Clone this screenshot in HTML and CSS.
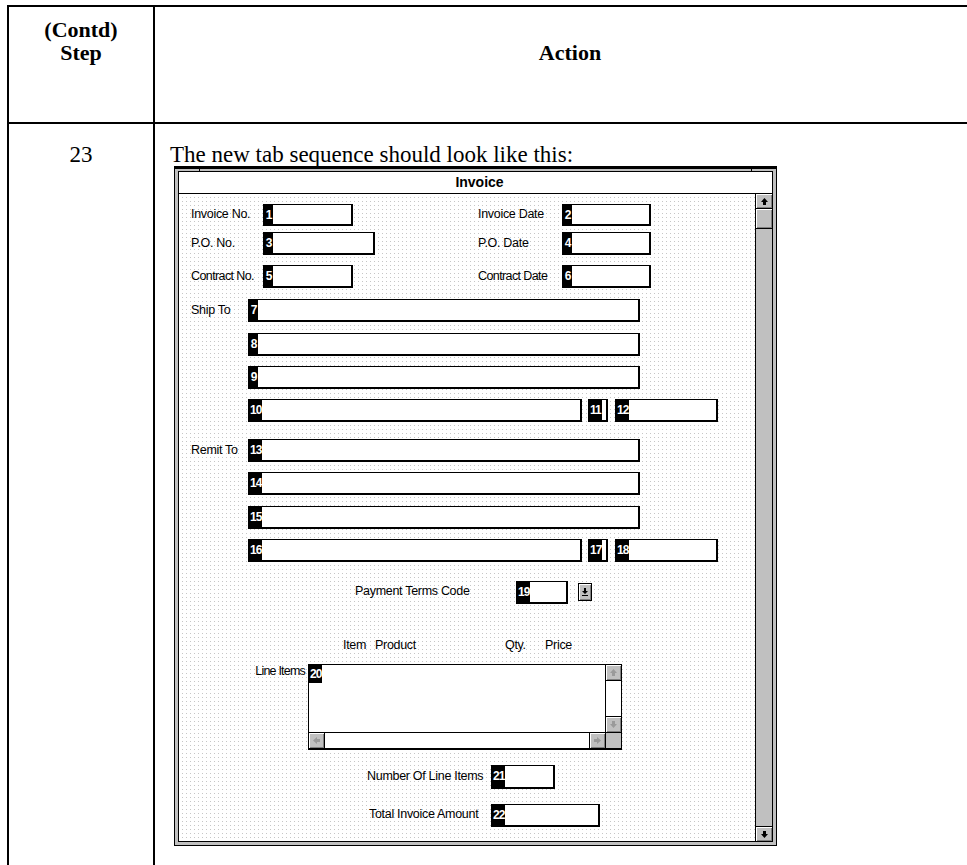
FILE: index.html
```html
<!DOCTYPE html>
<html>
<head>
    <title>Step 23</title>
    <link rel="stylesheet" href="styles.css">
</head>
<body>
    <table class="steps">
        <tr class="head">
            <th class="step-col">(Contd)<br>Step</th>
            <th class="action-col">Action</th>
        </tr>
        <tr>
            <td class="step-num">23</td>
            <td class="action">
                <p class="intro">The new tab sequence should look like this:</p>

                <div class="window">
                    <div class="inner">
                        <div class="titlebar">Invoice</div>
                        <div class="body">
                            <div class="canvas">
                                <span class="lbl l-invno">Invoice No.</span>
                                <div class="field f1"><span class="tag">1</span></div>
                                <span class="lbl l-invdate">Invoice Date</span>
                                <div class="field f2"><span class="tag">2</span></div>

                                <span class="lbl l-pono">P.O. No.</span>
                                <div class="field f3"><span class="tag">3</span></div>
                                <span class="lbl l-podate">P.O. Date</span>
                                <div class="field f4"><span class="tag">4</span></div>

                                <span class="lbl l-cno">Contract No.</span>
                                <div class="field f5"><span class="tag">5</span></div>
                                <span class="lbl l-cdate">Contract Date</span>
                                <div class="field f6"><span class="tag">6</span></div>

                                <span class="lbl l-ship">Ship To</span>
                                <div class="field wide f7"><span class="tag">7</span></div>
                                <div class="field wide f8"><span class="tag">8</span></div>
                                <div class="field wide f9"><span class="tag">9</span></div>
                                <div class="field city f10"><span class="tag">10</span></div>
                                <div class="field state f11"><span class="tag">11</span></div>
                                <div class="field zip f12"><span class="tag">12</span></div>

                                <span class="lbl l-remit">Remit To</span>
                                <div class="field wide f13"><span class="tag">13</span></div>
                                <div class="field wide f14"><span class="tag">14</span></div>
                                <div class="field wide f15"><span class="tag">15</span></div>
                                <div class="field city f16"><span class="tag">16</span></div>
                                <div class="field state f17"><span class="tag">17</span></div>
                                <div class="field zip f18"><span class="tag">18</span></div>

                                <span class="lbl l-pay">Payment Terms Code</span>
                                <div class="field f19"><span class="tag">19</span></div>
                                <div class="combo-btn">
                                    <svg width="8" height="10" viewBox="0 0 8 10"><path d="M3 1h2v3h2L4 7 1 4h2z" fill="#000"/><rect x="1" y="8" width="6" height="1" fill="#000"/></svg>
                                </div>

                                <span class="lbl col-h h-item">Item</span>
                                <span class="lbl col-h h-prod">Product</span>
                                <span class="lbl col-h h-qty">Qty.</span>
                                <span class="lbl col-h h-price">Price</span>

                                <span class="lbl l-lines">Line Items</span>
                                <div class="listbox">
                                    <div class="list-area"><span class="tag">20</span></div>
                                    <div class="list-v">
                                        <div class="sb-btn">
                                            <svg width="9" height="9" viewBox="0 0 9 9"><path d="M4.5 1L8 5H6v3H3V5H1z" fill="#9a9a9a"/></svg>
                                        </div>
                                        <div class="sb-track"></div>
                                        <div class="sb-btn">
                                            <svg width="9" height="9" viewBox="0 0 9 9"><path d="M4.5 8L8 4H6V1H3v3H1z" fill="#9a9a9a"/></svg>
                                        </div>
                                    </div>
                                    <div class="list-h">
                                        <div class="sb-btn">
                                            <svg width="9" height="9" viewBox="0 0 9 9"><path d="M1 4.5L5 1v2h3v3H5v2z" fill="#9a9a9a"/></svg>
                                        </div>
                                        <div class="sb-track"></div>
                                        <div class="sb-btn">
                                            <svg width="9" height="9" viewBox="0 0 9 9"><path d="M8 4.5L4 1v2H1v3h3v2z" fill="#9a9a9a"/></svg>
                                        </div>
                                    </div>
                                    <div class="list-corner"></div>
                                </div>

                                <span class="lbl l-count">Number Of Line Items</span>
                                <div class="field f21"><span class="tag">21</span></div>
                                <span class="lbl l-total">Total Invoice Amount</span>
                                <div class="field f22"><span class="tag">22</span></div>
                            </div>

                            <div class="vscroll">
                                <div class="arrow-btn">
                                    <svg width="9" height="9" viewBox="0 0 9 9"><path d="M4.5 1L8 5H6v3H3V5H1z" fill="#000"/></svg>
                                </div>
                                <div class="thumb"></div>
                                <div class="track"></div>
                                <div class="arrow-btn down">
                                    <svg width="9" height="9" viewBox="0 0 9 9"><path d="M4.5 8L8 4H6V1H3v3H1z" fill="#000"/></svg>
                                </div>
                            </div>
                        </div>
                    </div>
                </div>
            </td>
        </tr>
    </table>
</body>
</html>
```

FILE: styles.css
```css
body {
    margin: 5px 0 0 7px;
    font-family: 'Liberation Serif', 'Times New Roman', serif;
    background: #fff;
    color: #000;
    overflow: hidden;
}

.steps {
    border-collapse: collapse;
    width: 980px;
}

.steps th,
.steps td {
    border: 2px solid #000;
    padding: 0;
}

.head {
    height: 117px;
}

.head th {
    vertical-align: top;
    font-size: 22px;
    line-height: 23px;
    font-weight: bold;
    text-align: center;
}

.step-col {
    width: 144px;
    padding-top: 11px !important;
}

.action-col {
    padding-top: 34px !important;
}

.step-num {
    vertical-align: top;
    text-align: center;
    font-size: 23px;
    line-height: 22px;
    padding-top: 20px !important;
}

.action {
    vertical-align: top;
    padding: 20px 0 60px 15px !important;
}

.intro {
    margin: 0;
    font-size: 23px;
    line-height: 22px;
}

/* invoice window */
.window {
    width: 595px;
    margin-left: 4px;
    border: 1px solid #000;
    border-top-width: 3px;
    background: #c0c0c0;
    padding: 2px 3px 3px;
    position: relative;
}

.window::before,
.window::after {
    content: "";
    position: absolute;
    top: -3px;
    width: 1px;
    height: 5px;
    background: #000;
}

.window::before {
    left: 24px;
}

.window::after {
    right: 24px;
}

.inner {
    border: 1px solid #000;
    background: #fff;
}

.titlebar {
    height: 21px;
    line-height: 21px;
    border-bottom: 1px solid #000;
    text-align: center;
    font-family: 'Liberation Sans', Arial, sans-serif;
    font-weight: bold;
    font-size: 14px;
    padding-left: 8px;
}

.body {
    display: flex;
}

.canvas {
    position: relative;
    flex: 1;
    height: 647px;
    background:
        linear-gradient(90deg, #fff 3px, transparent 3px) 0 0 / 4px 4px,
        linear-gradient(#fff 3px, transparent 3px) 0 0 / 4px 4px,
        #c6c6c6;
    font-family: 'Liberation Sans', Arial, sans-serif;
    font-size: 12.5px;
}

.lbl {
    position: absolute;
    white-space: nowrap;
    line-height: 23px;
    letter-spacing: -0.3px;
}

.field {
    position: absolute;
    height: 20px;
    background: #fff;
    border: 1px solid #000;
    border-bottom-width: 2px;
    border-right-width: 2px;
    box-sizing: content-box;
}

.tag {
    display: inline-block;
    height: 100%;
    min-width: 7px;
    padding: 0 1px;
    background: #000;
    color: #fff;
    font-weight: bold;
    font-size: 12px;
    line-height: 20px;
    letter-spacing: -1px;
    text-align: center;
    vertical-align: top;
}

/* canvas positions */
.l-invno { left: 12px; top: 9px; }
.l-invdate { left: 299px; top: 9px; }
.l-pono { left: 12px; top: 38px; }
.l-podate { left: 299px; top: 38px; }
.l-cno { left: 12px; top: 71px; letter-spacing: -0.6px; }
.l-cdate { left: 299px; top: 71px; letter-spacing: -0.6px; }
.l-ship { left: 12px; top: 105px; }
.l-remit { left: 12px; top: 245px; }
.l-pay { left: 176px; top: 386px; }
.col-h { top: 444px; line-height: 14px; }
.h-item { left: 164px; }
.h-prod { left: 196px; }
.h-qty { left: 326px; }
.h-price { left: 366px; }
.l-lines {
    left: 56px;
    width: 70px;
    top: 470px;
    line-height: 14px;
    text-align: right;
    letter-spacing: -0.8px;
}
.l-count { left: 188px; top: 571px; }
.l-total { left: 190px; top: 609px; }

.f1 { left: 84px; top: 10px; width: 87px; height: 19px; }
.f2 { left: 383px; top: 10px; width: 86px; height: 19px; }
.f3 { left: 84px; top: 38px; width: 109px; }
.f4 { left: 383px; top: 38px; width: 86px; }
.f5 { left: 84px; top: 71px; width: 87px; }
.f6 { left: 383px; top: 71px; width: 86px; }

.wide { left: 69px; width: 389px; }
.city { left: 69px; width: 331px; }
.state { left: 409px; width: 17px; }
.zip { left: 436px; width: 100px; }

.f7 { top: 105px; }
.f8 { top: 139px; }
.f9 { top: 172px; }
.f10, .f11, .f12 { top: 205px; }
.f13 { top: 245px; }
.f14 { top: 278px; }
.f15 { top: 312px; }
.f16, .f17, .f18 { top: 345px; }

.f19 { left: 337px; top: 387px; width: 49px; }
.f21 { left: 312px; top: 571px; width: 61px; height: 21px; }
.f22 { left: 312px; top: 610px; width: 106px; }

.combo-btn {
    position: absolute;
    left: 399px;
    top: 389px;
    width: 12px;
    height: 16px;
    border: 1px solid #000;
    background: #c0c0c0;
    box-shadow: inset 1px 1px 0 #fff, inset -1px -1px 0 #808080;
    display: flex;
    align-items: center;
    justify-content: center;
}

/* line items list */
.listbox {
    position: absolute;
    left: 129px;
    top: 470px;
    width: 312px;
    height: 83px;
    border: 1px solid #000;
    border-bottom-width: 2px;
    background: #fff;
    display: grid;
    grid-template-columns: 1fr 16px;
    grid-template-rows: 1fr 16px;
}

.list-area .tag {
    height: 18px;
    line-height: 18px;
}

.list-v {
    display: flex;
    flex-direction: column;
    border-left: 1px solid #000;
}

.list-h {
    display: flex;
    border-top: 1px solid #000;
}

.list-corner {
    border-top: 1px solid #000;
    border-left: 1px solid #000;
    background: #c0c0c0;
}

.sb-btn {
    flex: 0 0 15px;
    height: 15px;
    background: #c0c0c0;
    box-shadow: inset 1px 1px 0 #fff, inset -1px -1px 0 #808080;
    display: flex;
    align-items: center;
    justify-content: center;
}

.list-v .sb-btn:first-child {
    border-bottom: 1px solid #000;
}

.list-v .sb-btn:last-child {
    border-top: 1px solid #000;
}

.list-h .sb-btn:first-child {
    border-right: 1px solid #000;
}

.list-h .sb-btn:last-child {
    border-left: 1px solid #000;
}

.sb-track {
    flex: 1;
    background: #fff;
}

/* window scrollbar */
.vscroll {
    width: 16px;
    border-left: 1px solid #000;
    background: #c0c0c0;
    display: flex;
    flex-direction: column;
}

.arrow-btn {
    height: 14px;
    border-bottom: 1px solid #000;
    background: #c0c0c0;
    box-shadow: inset 1px 1px 0 #fff, inset -1px -1px 0 #808080;
    display: flex;
    align-items: center;
    justify-content: center;
}

.arrow-btn.down {
    border-bottom: none;
    border-top: 1px solid #000;
}

.thumb {
    height: 19px;
    border-bottom: 1px solid #000;
    background: #c0c0c0;
    box-shadow: inset 1px 1px 0 #fff, inset -1px -1px 0 #808080;
}

.track {
    flex: 1;
    background: #c0c0c0;
}
```
